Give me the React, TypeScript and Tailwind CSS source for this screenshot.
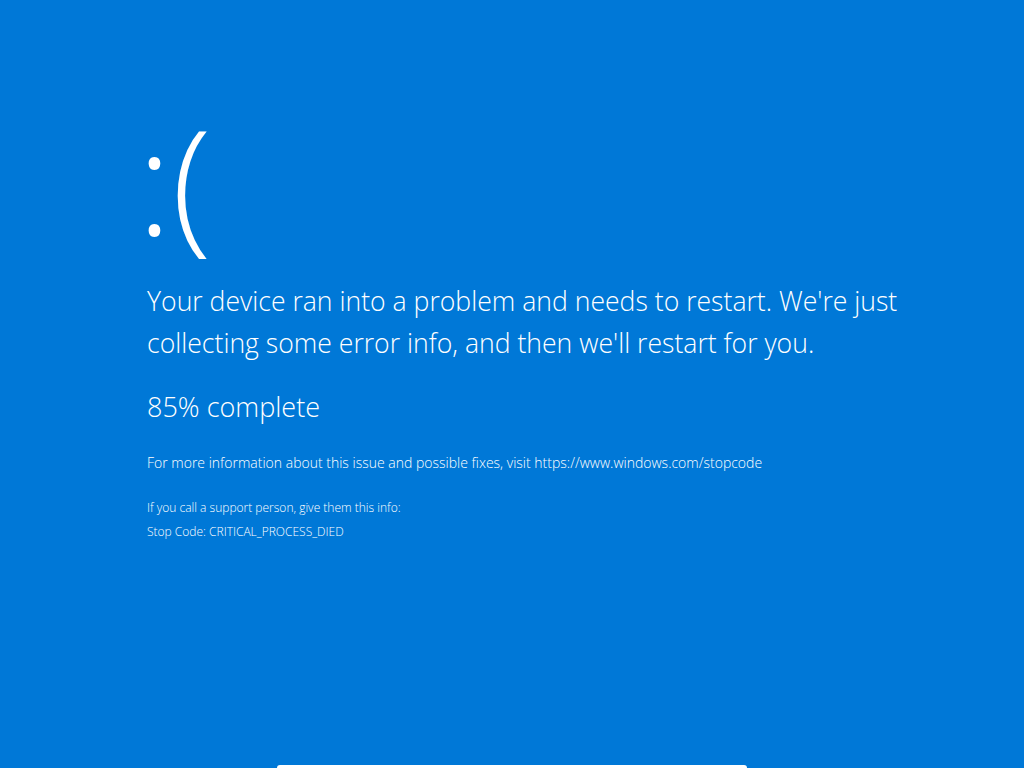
export default function App() {
  return (
    <div
      className="flex h-screen w-full flex-col overflow-hidden bg-[#0078d7] text-white"
      style={{ fontFamily: '"Open Sans", "Noto Sans", sans-serif' }}
    >
      <div className="flex-1 pl-[147px] pt-[107px]">
        <div className="-ml-[10px] text-[146px] font-light leading-[146px]">:(</div>
        <p className="mt-[27px] text-[26.6px] font-light leading-[42px]">
          Your device ran into a problem and needs to restart. We're just
          <br />
          collecting some error info, and then we'll restart for you.
        </p>
        <p className="mt-[22px] text-[27px] font-light leading-[42px]">85% complete</p>
        <p className="mt-[25px] text-[14px] font-light leading-[20px]">
          For more information about this issue and possible fixes, visit https://www.windows.com/stopcode
        </p>
        <p className="mt-[27px] text-[12px] font-light leading-[16px]">
          If you call a support person, give them this info:
        </p>
        <p className="mt-[8px] text-[12px] font-light leading-[16px]">
          Stop Code: CRITICAL_PROCESS_DIED
        </p>
      </div>
      <div className="mx-auto h-[3px] w-[470px] rounded-t-[6px] bg-white" />
    </div>
  );
}
